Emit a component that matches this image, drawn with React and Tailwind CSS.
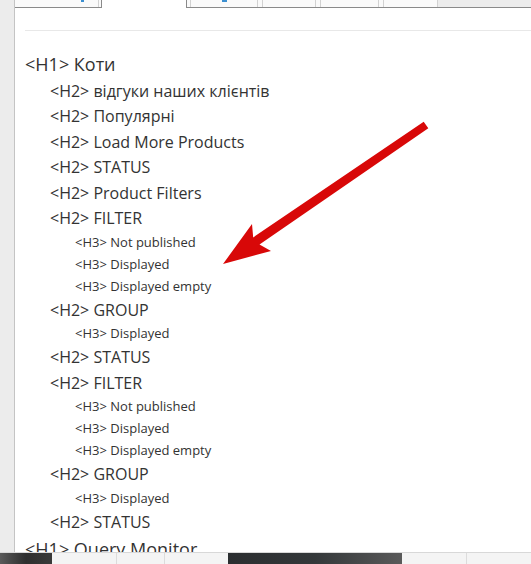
import React from "react";

const items = [
  { level: 1, tag: "H1", text: "Коти" },
  { level: 2, tag: "H2", text: "відгуки наших клієнтів" },
  { level: 2, tag: "H2", text: "Популярні" },
  { level: 2, tag: "H2", text: "Load More Products" },
  { level: 2, tag: "H2", text: "STATUS" },
  { level: 2, tag: "H2", text: "Product Filters" },
  { level: 2, tag: "H2", text: "FILTER" },
  { level: 3, tag: "H3", text: "Not published" },
  { level: 3, tag: "H3", text: "Displayed" },
  { level: 3, tag: "H3", text: "Displayed empty" },
  { level: 2, tag: "H2", text: "GROUP" },
  { level: 3, tag: "H3", text: "Displayed" },
  { level: 2, tag: "H2", text: "STATUS" },
  { level: 2, tag: "H2", text: "FILTER" },
  { level: 3, tag: "H3", text: "Not published" },
  { level: 3, tag: "H3", text: "Displayed" },
  { level: 3, tag: "H3", text: "Displayed empty" },
  { level: 2, tag: "H2", text: "GROUP" },
  { level: 3, tag: "H3", text: "Displayed" },
  { level: 2, tag: "H2", text: "STATUS" },
  { level: 1, tag: "H1", text: "Query Monitor" },
];

const rowClass = {
  1: "h-[29px] text-[18px] pl-0",
  2: "h-[25.5px] text-[16px] pl-[25px]",
  3: "h-[22px] text-[13px] pl-[50px]",
};

function Tabs() {
  return (
    <div className="flex h-[8px] shrink-0">
      {/* first tab, cut off at the top */}
      <div className="relative w-[87px] bg-[#fafafa] border-b border-r border-[#8a8a8a]">
        <div className="absolute right-[2px] top-0 bottom-0 w-px bg-[#d2d2d2]" />
        <div className="absolute left-[66px] top-0 w-[3px] h-[2px] bg-[#3c8fd0]" />
      </div>
      {/* active tab */}
      <div className="w-[84px] bg-white" />
      {/* tab group */}
      <div className="flex border-l border-b border-[#8a8a8a] bg-[#fafafa]">
        <div className="relative w-[71px] border-l-[3px] border-l-[#fafafa] border-r border-r-[#d2d2d2]">
          <div className="absolute left-0 top-0 w-px h-full bg-[#d2d2d2]" />
          <div className="absolute left-[32px] top-0 w-[5px] h-[2px] bg-[#3c8fd0]" />
        </div>
        <div className="w-[4px]" />
        <div className="w-[54px] border-l border-r border-[#d2d2d2]" />
        <div className="w-[4px]" />
        <div className="w-[59px] border-l border-r border-[#d2d2d2]" />
        <div className="w-[4px]" />
        <div className="w-[55px] border-l border-r border-[#d2d2d2]" />
      </div>
      {/* empty area */}
      <div className="flex-1 bg-[#ececec] border-b border-[#8a8a8a]" />
    </div>
  );
}

function Arrow() {
  return (
    <svg
      className="absolute left-0 top-0 pointer-events-none"
      width="531"
      height="564"
      viewBox="0 0 531 564"
    >
      <polygon
        fill="#d80808"
        points="423.7,121.7 428.3,128.3 259.5,244.5 271,251 223,264 252,224 253.2,237.4"
      />
    </svg>
  );
}

function BottomStrip() {
  return (
    <div className="flex h-[12px] shrink-0 border-t border-[#d8d8d8]">
      <div className="w-[52px] bg-gradient-to-r from-[#5a5a5a] via-[#2e2e2e] to-[#3a3a3a]" />
      <div className="w-[65px] bg-[#f4f4f4] border-r border-[#dcdcdc]" />
      <div className="w-[48px] bg-[#f4f4f4] border-r border-[#dcdcdc]" />
      <div className="w-[63px] bg-[#f4f4f4]" />
      <div className="w-[174px] bg-gradient-to-r from-[#2b2e30] via-[#34383a] to-[#5a5a5a]" />
      <div className="w-[65px] bg-[#f4f4f4] border-r border-[#dcdcdc]" />
      <div className="flex-1 bg-[#f4f4f4]" />
    </div>
  );
}

export default function App() {
  return (
    <div
      className="relative w-[531px] h-[564px] overflow-hidden bg-white flex flex-col text-[#333]"
      style={{ fontFamily: '"Open Sans", "Noto Sans", sans-serif' }}
    >
      <div className="flex flex-1 min-h-0">
        <div className="w-[14px] shrink-0 bg-[#ececec]" />
        <div className="flex-1 min-w-0 border-l border-[#c4c4c4] flex flex-col overflow-hidden">
          <Tabs />
          <div className="pl-[10px]">
            <div className="mt-[22px] h-px bg-[#e8e8e8]" />
            <ul className="mt-[18px]">
              {items.map((item, i) => (
                <li
                  key={i}
                  className={`flex items-center whitespace-nowrap leading-none ${rowClass[item.level]}`}
                >
                  &lt;{item.tag}&gt; {item.text}
                </li>
              ))}
            </ul>
          </div>
        </div>
      </div>
      <BottomStrip />
      <Arrow />
    </div>
  );
}
